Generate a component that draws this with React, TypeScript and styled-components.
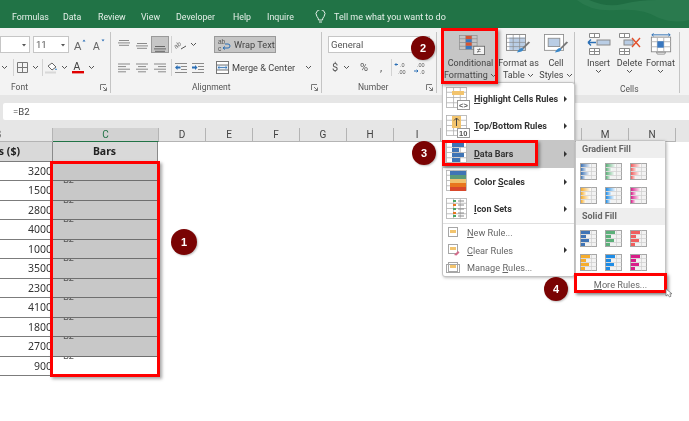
import React from "react";
import styled, { createGlobalStyle } from "styled-components";

const Global = createGlobalStyle`
  html, body { margin: 0; padding: 0; background: #fff; }
  * { box-sizing: border-box; }
`;

const UI = `Roboto, "Noto Sans", "Liberation Sans", sans-serif`;
const SHEET = `"Noto Sans", "Open Sans", "Liberation Sans", sans-serif`;

const Page = styled.div`
  position: relative;
  width: 689px;
  height: 421px;
  overflow: hidden;
  display: flex;
  flex-direction: column;
  background: #fff;
  font-family: ${UI};
  color: #444;
  filter: blur(0.25px);
`;

const TitleBar = styled.div`
  position: relative;
  height: 28px;
  flex: none;
  background: #217346;
  display: flex;
  align-items: center;
  padding: 6px 0 0 12px;
  color: #e4efe8;
  font-size: 8.8px;
  overflow: hidden;
`;
const Tab = styled.span<{ $w: number }>`
  width: ${(p) => p.$w}px;
  white-space: nowrap;
  position: relative;
`;
const Tell = styled.span`
  margin-left: 8px;
  white-space: nowrap;
  font-size: 9px;
  position: relative;
`;
const Blob = styled.svg`
  position: absolute;
  right: 0;
  top: 0;
`;

const Ribbon = styled.div`
  height: 67px;
  flex: none;
  background: #f3f3f3;
  display: flex;
  overflow: hidden;
`;
const Group = styled.div<{ $w: number; $pl?: number }>`
  width: ${(p) => p.$w}px;
  flex: none;
  padding-left: ${(p) => p.$pl ?? 0}px;
  padding-bottom: 1px;
  display: flex;
  flex-direction: column;
  position: relative;
  &::after {
    content: "";
    position: absolute;
    right: 0;
    top: 4px;
    bottom: 2px;
    width: 1px;
    background: #c4c4c4;
  }
`;
const GroupBody = styled.div`
  flex: 1;
  display: flex;
  flex-direction: column;
  padding-top: 8px;
  gap: 6px;
`;
const BigBody = styled.div<{ $pl?: number }>`
  flex: 1;
  display: flex;
  align-items: flex-start;
  padding-left: ${(p) => p.$pl ?? 0}px;
`;
const GroupLabel = styled.div<{ $lead: number }>`
  display: grid;
  grid-template-columns: ${(p) => p.$lead}px auto 1fr;
  align-items: center;
  height: 14px;
  font-size: 8.5px;
  color: #555;
  padding-right: 4px;
`;
const LabelText = styled.span`
  grid-column: 2;
  white-space: nowrap;
`;
const Launcher = styled.svg`
  grid-column: 3;
  justify-self: end;
`;
const Row = styled.div`
  display: flex;
  align-items: center;
  height: 17px;
`;
const Slot = styled.div<{ $w: number; $on?: boolean }>`
  width: ${(p) => p.$w}px;
  height: 17px;
  flex: none;
  display: flex;
  align-items: center;
  justify-content: center;
  background: ${(p) => (p.$on ? "#c6c6c6" : "transparent")};
  outline: ${(p) => (p.$on ? "1px solid #9a9a9a" : "none")};
  outline-offset: -1px;
  font-size: 11px;
  color: #555;
`;
const VSep = styled.div`
  width: 1px;
  height: 17px;
  flex: none;
  background: #d2d2d2;
`;
const Combo = styled.div<{ $w: number; $ml?: number }>`
  width: ${(p) => p.$w}px;
  margin-left: ${(p) => p.$ml ?? 0}px;
  height: 17px;
  flex: none;
  background: #fff;
  border: 1px solid #c6c6c6;
  display: flex;
  align-items: center;
  justify-content: space-between;
  padding: 0 2px;
  font-size: 9.5px;
  color: #555;
`;
const Wrap = styled.div`
  width: 62px;
  height: 17px;
  margin-left: 17px;
  flex: none;
  background: #c6c6c6;
  border: 1px solid #9a9a9a;
  display: flex;
  align-items: center;
  gap: 3px;
  padding-left: 3px;
  font-size: 9.2px;
  color: #444;
  white-space: nowrap;
`;
const Merge = styled.div`
  margin-left: 9px;
  display: flex;
  align-items: center;
  gap: 3px;
  font-size: 9.2px;
  color: #444;
  white-space: nowrap;
`;
const BigBtn = styled.div<{ $w: number }>`
  width: ${(p) => p.$w}px;
  flex: none;
  height: 55px;
  display: flex;
  flex-direction: column;
  align-items: center;
  padding-top: 5px;
  font-size: 9px;
  line-height: 12px;
  color: #444;
  white-space: nowrap;
  text-align: center;
`;
const BigBtnOn = styled(BigBtn)`
  background: #c6c6c6;
`;
const BigIconBox = styled.div<{ $ml?: number }>`
  height: 24px;
  flex: none;
  display: flex;
  align-items: flex-end;
  padding-bottom: 2px;
  margin-left: ${(p) => p.$ml ?? 0}px;
`;

const Band = styled.div<{ $h: number }>`
  height: ${(p) => p.$h}px;
  flex: none;
  background: #e6e6e6;
`;
const FormulaBar = styled.div`
  height: 17px;
  flex: none;
  background: #e6e6e6;
  padding-left: 3px;
`;
const FormulaInput = styled.div`
  height: 17px;
  background: #fff;
  border-radius: 2px 0 0 2px;
  padding-left: 10px;
  font-size: 9.5px;
  line-height: 17px;
  color: #444;
`;
const Columns = styled.div`
  height: 14px;
  flex: none;
  display: flex;
  background: #e6e6e6;
  font-size: 10px;
  color: #444;
`;
const ColHead = styled.div<{ $w: number; $on?: boolean; $clip?: boolean }>`
  width: ${(p) => p.$w}px;
  flex: none;
  display: flex;
  align-items: center;
  justify-content: ${(p) => (p.$clip ? "flex-start" : "center")};
  overflow: hidden;
  background: ${(p) => (p.$on ? "#d2d2d2" : "transparent")};
  color: ${(p) => (p.$on ? "#217346" : "#444")};
  border-right: 1px solid #b4b4b4;
  border-bottom: 1px solid ${(p) => (p.$on ? "#217346" : "#b4b4b4")};
`;
const Sheet = styled.div`
  display: grid;
  grid-template-columns: 53px 105px;
  grid-auto-rows: 19.5px;
  font-family: ${SHEET};
  font-size: 10.5px;
  color: #333;
`;
const Cell = styled.div`
  border-bottom: 1px solid #7c7c7c;
  display: flex;
  align-items: center;
  justify-content: flex-end;
  padding-right: 1px;
  overflow: hidden;
`;
const HeadCell = styled(Cell)`
  background: #d9d9d9;
  font-weight: 700;
  color: #222;
  white-space: nowrap;
  justify-content: center;
  border-right: 1px solid #8a8a8a;
`;
const ClipHead = styled(HeadCell)`
  justify-content: flex-end;
  padding-right: 32px;
`;
const BarCell = styled.div<{ $fill: boolean }>`
  background: ${(p) => (p.$fill ? "#c8c8c8" : "#fff")};
  border-bottom: 1px solid #6f6f6f;
  border-right: 1px solid #8a8a8a;
  overflow: hidden;
  padding-left: 10px;
  font-size: 9px;
  line-height: 9px;
  color: #555;
`;
const Clipped = styled.div`
  margin-top: -6px;
`;

const Frame = styled.div<{ $x: number; $y: number; $w: number; $h: number }>`
  position: absolute;
  left: ${(p) => p.$x}px;
  top: ${(p) => p.$y}px;
  width: ${(p) => p.$w}px;
  height: ${(p) => p.$h}px;
  border: 3px solid #ff0000;
  box-shadow: 2px 2px 3px rgba(0, 0, 0, 0.35);
  pointer-events: none;
`;
const Badge = styled.div<{ $x: number; $y: number; $d?: number }>`
  position: absolute;
  left: ${(p) => p.$x - (p.$d ?? 24) / 2}px;
  top: ${(p) => p.$y - (p.$d ?? 24) / 2}px;
  width: ${(p) => p.$d ?? 24}px;
  height: ${(p) => p.$d ?? 24}px;
  border-radius: 50%;
  background: #7a0303;
  color: #fff;
  font: 700 11px/${(p) => p.$d ?? 24}px "Liberation Sans", sans-serif;
  text-align: center;
  box-shadow: 1px 1px 2px rgba(0, 0, 0, 0.25);
`;

const Menu = styled.div`
  position: absolute;
  left: 442px;
  top: 82px;
  width: 133px;
  height: 195px;
  background: #fff;
  border: 1px solid #c4c4c4;
  border-radius: 3px;
  box-shadow: 1px 1px 3px rgba(0, 0, 0, 0.25);
  display: flex;
  flex-direction: column;
  padding-top: 2px;
`;
const BigItem = styled.div<{ $on?: boolean }>`
  height: 27.6px;
  flex: none;
  display: flex;
  align-items: center;
  padding-left: 3px;
  gap: 4px;
  background: ${(p) => (p.$on ? "#c6c6c6" : "transparent")};
  font-size: 9px;
  font-weight: 700;
  color: #333;
  white-space: nowrap;
  position: relative;
`;
const SmallItem = styled.div`
  height: 17.5px;
  flex: none;
  display: flex;
  align-items: center;
  padding-left: 3px;
  gap: 7px;
  font-size: 9.2px;
  color: #666;
  white-space: nowrap;
`;
const Arrow = styled.span`
  margin-left: auto;
  margin-right: 7px;
  width: 0;
  height: 0;
  border-left: 3px solid #333;
  border-top: 3px solid transparent;
  border-bottom: 3px solid transparent;
`;
const MenuRule = styled.div`
  height: 1px;
  flex: none;
  background: #e0e0e0;
`;
const Sub = styled.div`
  position: absolute;
  left: 575px;
  top: 140px;
  width: 91px;
  height: 153px;
  background: #fff;
  border: 1px solid #c4c4c4;
  border-radius: 3px;
  box-shadow: 1px 1px 3px rgba(0, 0, 0, 0.25);
  display: flex;
  flex-direction: column;
`;
const SubHead = styled.div`
  height: 17px;
  flex: none;
  background: #eeeeee;
  font-size: 9px;
  font-weight: 700;
  color: #666;
  line-height: 17px;
  padding-left: 6px;
`;
const SwatchGrid = styled.div`
  height: 50px;
  flex: none;
  display: grid;
  grid-template-columns: repeat(3, 17px);
  column-gap: 8px;
  row-gap: 7px;
  align-content: center;
  padding-left: 4px;
`;
const MoreRow = styled.div`
  margin-top: auto;
  height: 19px;
  flex: none;
  font-size: 9.2px;
  color: #666;
  text-align: center;
  line-height: 19px;
`;
const Cursor = styled.svg`
  position: absolute;
  left: 665px;
  top: 288px;
`;

const Chev = () => (
  <svg width="7" height="5" viewBox="0 0 7 5">
    <path d="M1 1l2.500 2.500L6 1" fill="none" stroke="#555" strokeWidth="1" />
  </svg>
);
const Caret = () => (
  <svg width="6" height="4" viewBox="0 0 6 4">
    <path d="M1 1h4L3 3.500z" fill="#555" />
  </svg>
);
const Launch = () => (
  <Launcher width="7" height="7" viewBox="0 0 7 7">
    <path d="M.5 6V.5H6M3 3l3.500 3.500M6.500 3.500v3h-3" fill="none" stroke="#777" strokeWidth="1" />
  </Launcher>
);
const Lines = ({ kind, hi }: { kind: "l" | "c" | "r" | "t" | "m" | "b"; hi?: boolean }) => {
  const c = hi ? "#666" : "#8a8a8a";
  if (kind === "t" || kind === "m" || kind === "b") {
    const y = kind === "t" ? 2 : kind === "m" ? 5 : 8;
    return (
      <svg width="12" height="14" viewBox="0 0 12 14">
        {[0, 2.4, 4.8].map((d) => (
          <rect key={d} x={d === 2.4 ? 0 : 1} y={y + d} width={d === 2.4 ? 12 : 10} height="1" fill={c} />
        ))}
      </svg>
    );
  }
  const rows = [12, 8, 12, 8];
  return (
    <svg width="12" height="12" viewBox="0 0 12 12">
      {rows.map((w, i) => (
        <rect key={i} x={kind === "l" ? 0 : kind === "c" ? (12 - w) / 2 : 12 - w} y={1.5 + i * 2.6} width={w} height="1" fill={c} />
      ))}
    </svg>
  );
};
const Indent = ({ flip }: { flip?: boolean }) => (
  <svg width="12" height="12" viewBox="0 0 12 12">
    {[1, 4, 7, 10].map((y) => (
      <rect key={y} x={y === 1 || y === 10 ? 0 : 6} y={y} width={y === 1 || y === 10 ? 12 : 6} height="1" fill="#8a8a8a" />
    ))}
    <path d={flip ? "M0 4.500h3V3l2.500 2.500L3 8V6.500H0z" : "M5.500 4.500h-3V3L0 5.500 2.500 8V6.500h3z"} fill="#2b6fb5" />
  </svg>
);
const Orient = () => (
  <svg width="13" height="12" viewBox="0 0 13 12" style={{ overflow: "visible" }}>
    <text x="0" y="8" fontSize="6.5" fill="#666" transform="rotate(-35 4 6)" fontFamily="Liberation Sans">ab</text>
    <path d="M7 10l5-3" stroke="#555" fill="none" />
  </svg>
);
const GrowA = ({ up }: { up: boolean }) => (
  <svg width="12" height="12" viewBox="0 0 12 12">
    <text x="0" y="11" fontSize={up ? 11 : 10} fill="#666" fontFamily="Liberation Sans">A</text>
    <path d={up ? "M8.500 2.500l1.500-2 1.500 2z" : "M8.500 .5l1.500 2 1.500-2z"} fill="#2b6fb5" />
  </svg>
);
const BorderIcon = () => (
  <svg width="11" height="11" viewBox="0 0 11 11">
    <path d="M.5.5h10v10H.5zM5.500.5v10M.5 5.500h10" fill="none" stroke="#777" />
  </svg>
);
const FillIcon = () => (
  <svg width="13" height="13" viewBox="0 0 13 13">
    <path d="M3 5l4-3 4 4-4 3z" fill="#fff" stroke="#666" />
    <path d="M11 7l1 2h-2z" fill="#3a87c8" />
    <rect x="0" y="10.500" width="11" height="2" fill="#d8d8d8" />
  </svg>
);
const FontColor = () => (
  <svg width="12" height="13" viewBox="0 0 12 13">
    <text x="1.500" y="9" fontSize="10" fill="#444" fontFamily="Liberation Sans">A</text>
    <rect x="0" y="10" width="12" height="2.400" fill="#e00000" />
  </svg>
);
const WrapIcon = () => (
  <svg width="13" height="13" viewBox="0 0 13 13">
    <text x="0" y="6" fontSize="6.500" fill="#555" fontFamily="Liberation Sans">ab</text>
    <text x="0" y="12.500" fontSize="6.500" fill="#555" fontFamily="Liberation Sans">c</text>
    <path d="M5 10h5q2 0 2-2t-2-2H7M5 10l2-1.500M5 10l2 1.500" fill="none" stroke="#2b6fb5" />
  </svg>
);
const MergeIcon = () => (
  <svg width="13" height="13" viewBox="0 0 13 13">
    <rect x=".5" y=".5" width="12" height="12" fill="#fff" stroke="#777" />
    <rect x=".5" y="4" width="12" height="5" fill="#e6eef6" stroke="#777" />
    <path d="M2 6.500h9M2 6.500l1.500-1.200M2 6.500l1.500 1.200M11 6.500l-1.500-1.200M11 6.500l-1.500 1.200" stroke="#2b6fb5" fill="none" strokeWidth=".8" />
  </svg>
);
const Dec = ({ add }: { add: boolean }) => (
  <svg width="13" height="13" viewBox="0 0 13 13" style={{ overflow: "visible" }}>
    <text x={add ? 5 : 3} y="5.500" fontSize="5.500" fill="#555" fontFamily="Liberation Sans">{add ? ".0" : ".00"}</text>
    <text x={add ? 3 : 6} y="12.500" fontSize="5.500" fill="#555" fontFamily="Liberation Sans">{add ? ".00" : ".0"}</text>
    <path d={add ? "M0 3.500h3M0 3.500l1.300-1.300M0 3.500l1.300 1.300" : "M0 10h4M4 10l-1.300-1.300M4 10l-1.300 1.300"} stroke="#2b6fb5" fill="none" />
  </svg>
);
const GridLines = ({ w, h, c = "#a6a6a6" }: { w: number; h: number; c?: string }) => (
  <g stroke={c} fill="none" strokeWidth=".8">
    <rect x=".5" y=".5" width={w - 1} height={h - 1} />
    {[1, 2, 3].map((i) => (
      <path key={i} d={`M.5 ${(i * h) / 4}H${w - 0.5}`} />
    ))}
    <path d={`M${w * 0.36} .5V${h - 0.5}M${w * 0.68} .5V${h - 0.5}`} />
  </g>
);
const CondIcon = () => (
  <svg width="27" height="20" viewBox="0 0 32 24">
    <GridLines w={22} h={18} c="#8a8a8a" />
    <rect x="8" y="1" width="7" height="4" fill="#d65532" />
    <rect x="8" y="5" width="7" height="4" fill="#3a78c0" />
    <rect x="8" y="9" width="7" height="4" fill="#d65532" />
    <rect x="8" y="13" width="7" height="4" fill="#3a78c0" />
    <rect x="17.500" y="13.500" width="13" height="10" fill="#f3f3f3" stroke="#666" />
    <text x="21" y="22" fontSize="9" fill="#444" fontFamily="Liberation Sans">≠</text>
  </svg>
);
const TableIcon = () => (
  <svg width="25" height="21" viewBox="0 0 30 25">
    <rect x=".5" y=".5" width="23" height="19" fill="#fff" stroke="#8a8a8a" />
    <rect x="4" y="4" width="19" height="15" fill="#b9cde5" />
    <GridLines w={24} h={20} c="#8a8a8a" />
    <path d="M27 9l2 1-8 8-2-1z" fill="#777" />
    <path d="M15 19q4-4 6-1-1 4-8 4z" fill="#3a87c8" />
  </svg>
);
const StylesIcon = () => (
  <svg width="25" height="21" viewBox="0 0 30 25">
    <rect x=".5" y=".5" width="23" height="19" fill="#fff" stroke="#8a8a8a" />
    <rect x="5" y="5" width="14" height="10" fill="#b9cde5" stroke="#8a8a8a" />
    <path d="M27 9l2 1-8 8-2-1z" fill="#777" />
    <path d="M15 19q4-4 6-1-1 4-8 4z" fill="#3a87c8" />
  </svg>
);
const InsertIcon = () => (
  <svg width="24" height="22" viewBox="0 0 24 22">
    <path d="M2.500.5h10v4h-10zM7.500.5v4M2.500 15.500h10v6h-10zM7.500 15.500v6M2.500 18.500h10" fill="#fff" stroke="#8a8a8a" />
    <rect x="10" y="7" width="13" height="5" fill="#b9cde5" stroke="#8a8a8a" />
    <path d="M9 9.500H1M1 9.500l3-3M1 9.500l3 3" stroke="#2b6fb5" strokeWidth="1.400" fill="none" />
  </svg>
);
const DeleteIcon = () => (
  <svg width="24" height="22" viewBox="0 0 24 22">
    <path d="M1.500.5h10v4h-10zM6.500.5v4M1.500 15.500h10v6h-10zM6.500 15.500v6M1.500 18.500h10" fill="#fff" stroke="#8a8a8a" />
    <rect x="6" y="7" width="9" height="5" fill="#b9cde5" stroke="#8a8a8a" />
    <path d="M14 5l8 9M22 5l-8 9" stroke="#e2502c" strokeWidth="1.400" />
  </svg>
);
const FormatIcon = () => (
  <svg width="22" height="22" viewBox="0 0 22 24">
    <path d="M1 2h20M1 2l2-1.500M1 2l2 1.500M21 2l-2-1.500M21 2l-2 1.500" stroke="#2b6fb5" fill="none" />
    <rect x=".5" y="4.500" width="21" height="16" fill="#fff" stroke="#8a8a8a" />
    <path d="M7 4.500v16M14 4.500v16M.5 9.500h21M.5 15h21" stroke="#b4b4b4" />
    <rect x="7" y="9" width="7" height="7" fill="#3a78c0" />
    <path d="M6 21h10l-1 2H7z" fill="#fff" stroke="#8a8a8a" />
  </svg>
);
const BulbSvg = styled.svg`
  margin-left: 15px;
  position: relative;
`;
const Bulb = () => (
  <BulbSvg width="11" height="14" viewBox="0 0 11 14">
    <path d="M3.500 10q0-2-1.600-3.600a4.400 4.400 0 1 1 7.200 0Q7.500 8 7.500 10zM4 12h3" fill="none" stroke="#e4efe8" strokeWidth="1" />
  </BulbSvg>
);

const ItemSvg = styled.svg`
  flex: none;
`;
const MenuIcon = ({ children, badge }: { children?: React.ReactNode; badge?: string }) => (
  <ItemSvg width="24" height="23" viewBox="0 0 24 23">
    <rect x=".5" y=".5" width="20" height="20" fill="#fff" />
    <GridLines w={21} h={21} c="#b0b0b0" />
    {children}
    {badge && (
      <>
        <rect x="11.500" y="13.500" width="12" height="9" fill="#fff" stroke="#999" />
        <text x="13" y="21" fontSize="7.500" fill="#555" fontFamily="Liberation Sans">{badge}</text>
      </>
    )}
  </ItemSvg>
);
const SmallIcon = ({ kind }: { kind: "new" | "clear" | "manage" }) => (
  <ItemSvg width="14" height="12" viewBox="0 0 14 12">
    <rect x="2.500" y=".5" width="9" height="9" fill="#fff" stroke="#a6a6a6" />
    <rect x="4" y="3" width="6" height="3" fill="#f2c46e" />
    {kind === "clear" && <path d="M8 11l4-4 1.500 1.500-3 3z" fill="#d36b8a" />}
    {kind === "manage" && <rect x=".5" y="2.500" width="13" height="8" fill="none" stroke="#a6a6a6" />}
  </ItemSvg>
);
const Swatch = ({ color, solid, id }: { color: string; solid: boolean; id: string }) => (
  <svg width="17" height="17" viewBox="0 0 17 17">
    <defs>
      <linearGradient id={id}>
        <stop offset="0" stopColor={color} />
        <stop offset="1" stopColor="#fff" />
      </linearGradient>
    </defs>
    <rect x=".5" y=".5" width="16" height="16" fill="#f2f2f2" stroke="#a6a6a6" />
    <path d="M.5 4.500h16M.5 8.500h16M.5 12.500h16M11.500.5v16" stroke="#cfcfcf" strokeWidth=".7" />
    {[[1, 9], [5, 5], [9, 8], [13, 4]].map(([y, w]) => (
      <rect key={y} x="1" y={y} width={solid ? w : w + 1} height="3" fill={solid ? color : `url(#${id})`} />
    ))}
  </svg>
);

const tabs: [string, number][] = [
  ["Formulas", 51], ["Data", 35], ["Review", 43], ["View", 35],
  ["Developer", 57], ["Help", 34], ["Inquire", 33],
];
const sales = [3200, 1500, 2800, 4000, 1000, 3500, 2300, 4100, 1800, 2700, 900];
const colsRight = ["D", "E", "F", "G", "H", "I", "", "", "", "M", "N"];
const swatchColors = ["#3f74b5", "#5cb07a", "#ef5f5f", "#f6ad2e", "#1e8ce6", "#d81e8a"];
const BLetter = styled.span`
  margin-left: -5px;
`;

export default function App() {
  return (
    <Page>
      <Global />
      <TitleBar>
        <Blob width="120" height="28" viewBox="0 0 120 28">
          <path d="M8 0q14 12 40 10t42 8q16 6 30 2V0z" fill="#2a7a4e" />
          <path d="M20 0q18 8 34 4T88 0z" fill="#1f6c42" />
        </Blob>
        {tabs.map(([t, w]) => (
          <Tab key={t} $w={w}>{t}</Tab>
        ))}
        <Bulb />
        <Tell>Tell me what you want to do</Tell>
      </TitleBar>
      <Ribbon>
        <Group $w={111}>
          <GroupBody>
            <Row>
              <Combo $w={30}><span /><Caret /></Combo>
              <Combo $w={36} $ml={3}><span>11</span><Caret /></Combo>
              <Slot $w={22}><GrowA up /></Slot>
              <Slot $w={16}><GrowA up={false} /></Slot>
            </Row>
            <Row>
              <Slot $w={8}><Chev /></Slot>
              <Slot $w={5} />
              <VSep />
              <Slot $w={17}><BorderIcon /></Slot>
              <Slot $w={8}><Chev /></Slot>
              <Slot $w={3} />
              <VSep />
              <Slot $w={17}><FillIcon /></Slot>
              <Slot $w={8}><Chev /></Slot>
              <Slot $w={20}><FontColor /></Slot>
              <Slot $w={7}><Chev /></Slot>
            </Row>
          </GroupBody>
          <GroupLabel $lead={11}>
            <LabelText>Font</LabelText>
            <Launch />
          </GroupLabel>
        </Group>
        <Group $w={211} $pl={4}>
          <GroupBody>
            <Row>
              <Slot $w={18}><Lines kind="t" /></Slot>
              <Slot $w={18}><Lines kind="m" /></Slot>
              <Slot $w={18} $on><Lines kind="b" hi /></Slot>
              <Slot $w={2} />
              <VSep />
              <Slot $w={17}><Orient /></Slot>
              <Slot $w={8}><Chev /></Slot>
              <Wrap><WrapIcon />Wrap Text</Wrap>
            </Row>
            <Row>
              <Slot $w={18}><Lines kind="l" /></Slot>
              <Slot $w={18}><Lines kind="c" /></Slot>
              <Slot $w={18}><Lines kind="r" /></Slot>
              <Slot $w={2} />
              <VSep />
              <Slot $w={17}><Indent /></Slot>
              <Slot $w={18}><Indent flip /></Slot>
              <Merge><MergeIcon />Merge &amp; Center<Slot $w={20}><Chev /></Slot></Merge>
            </Row>
          </GroupBody>
          <GroupLabel $lead={77}>
            <LabelText>Alignment</LabelText>
            <Launch />
          </GroupLabel>
        </Group>
        <Group $w={115} $pl={6}>
          <GroupBody>
            <Row>
              <Combo $w={102}><span>General</span></Combo>
            </Row>
            <Row>
              <Slot $w={14}>$</Slot>
              <Slot $w={8}><Chev /></Slot>
              <Slot $w={4} />
              <Slot $w={20}>%</Slot>
              <Slot $w={14}>,</Slot>
              <Slot $w={3} />
              <VSep />
              <Slot $w={19}><Dec add /></Slot>
              <Slot $w={19}><Dec add={false} /></Slot>
            </Row>
          </GroupBody>
          <GroupLabel $lead={30}>
            <LabelText>Number</LabelText>
            <Launch />
          </GroupLabel>
        </Group>
        <Group $w={138} $pl={6}>
          <BigBody>
            <BigBtnOn $w={55}>
              <BigIconBox $ml={3}><CondIcon /></BigIconBox>
              <span>Conditional</span>
              <span>Formatting <Chev /></span>
            </BigBtnOn>
            <BigBtn $w={41}>
              <BigIconBox><TableIcon /></BigIconBox>
              <span>Format as</span>
              <span>Table <Chev /></span>
            </BigBtn>
            <BigBtn $w={34}>
              <BigIconBox><StylesIcon /></BigIconBox>
              <span>Cell</span>
              <span>Styles <Chev /></span>
            </BigBtn>
          </BigBody>
        </Group>
        <Group $w={105}>
          <BigBody $pl={8}>
            <BigBtn $w={31}>
              <BigIconBox><InsertIcon /></BigIconBox>
              <span>Insert</span>
              <Chev />
            </BigBtn>
            <BigBtn $w={31}>
              <BigIconBox><DeleteIcon /></BigIconBox>
              <span>Delete</span>
              <Chev />
            </BigBtn>
            <BigBtn $w={31}>
              <BigIconBox><FormatIcon /></BigIconBox>
              <span>Format</span>
              <Chev />
            </BigBtn>
          </BigBody>
          <GroupLabel $lead={45}>
            <LabelText>Cells</LabelText>
          </GroupLabel>
        </Group>
      </Ribbon>
      <Band $h={8} />
      <FormulaBar>
        <FormulaInput>=B2</FormulaInput>
      </FormulaBar>
      <Band $h={8} />
      <Columns>
        <ColHead $w={53} $clip><BLetter>B</BLetter></ColHead>
        <ColHead $w={106} $on>C</ColHead>
        {colsRight.map((c, i) => (
          <ColHead key={i} $w={47}>{c}</ColHead>
        ))}
      </Columns>
      <Sheet>
        <ClipHead>s ($)</ClipHead>
        <HeadCell>Bars</HeadCell>
        {sales.map((s, i) => (
          <React.Fragment key={s}>
            <Cell>{s}</Cell>
            <BarCell $fill={i < 10}><Clipped>B2</Clipped></BarCell>
          </React.Fragment>
        ))}
      </Sheet>

      <Frame $x={50} $y={161} $w={110} $h={216} />
      <Badge $x={184} $y={242} $d={26}>1</Badge>

      <Menu>
        <BigItem>
          <MenuIcon badge="<>"><rect x="6" y="4" width="12" height="4" fill="#f2c46e" /></MenuIcon>
          <span><u>H</u>ighlight Cells Rules</span><Arrow />
        </BigItem>
        <BigItem>
          <MenuIcon badge="10">
            <rect x="6" y="1" width="9" height="12" fill="#f2c46e" />
            <path d="M10.500 11V3M8 5.500l2.500-2.500L13 5.500" stroke="#444" fill="none" />
          </MenuIcon>
          <span><u>T</u>op/Bottom Rules</span><Arrow />
        </BigItem>
        <BigItem $on>
          <MenuIcon>
            {[[1, 12], [6, 7], [11, 12], [16, 8]].map(([y, w]) => (
              <rect key={y} x="6" y={y} width={w} height="4" fill="#3f74b5" />
            ))}
          </MenuIcon>
          <span><u>D</u>ata Bars</span><Arrow />
        </BigItem>
        <BigItem>
          <MenuIcon>
            {["#3f74b5", "#5b9a78", "#f0c26e", "#e8761e", "#d9482b"].map((c, i) => (
              <rect key={c} x="4" y={1 + i * 4} width="16" height="4" fill={c} />
            ))}
          </MenuIcon>
          <span>Color <u>S</u>cales</span><Arrow />
        </BigItem>
        <BigItem>
          <MenuIcon>
            {[3, 7, 11, 15, 18].map((y, i) => (
              <React.Fragment key={y}>
                <rect x="7" y={y - 1} width="3" height="2" fill={i % 2 ? "#e8761e" : "#4aa564"} />
                <rect x="12" y={y - 0.5} width="6" height="1" fill="#888" />
              </React.Fragment>
            ))}
          </MenuIcon>
          <span><u>I</u>con Sets</span><Arrow />
        </BigItem>
        <MenuRule />
        <SmallItem><SmallIcon kind="new" /><span><u>N</u>ew Rule...</span></SmallItem>
        <SmallItem><SmallIcon kind="clear" /><span><u>C</u>lear Rules</span><Arrow /></SmallItem>
        <SmallItem><SmallIcon kind="manage" /><span>Manage <u>R</u>ules...</span></SmallItem>
      </Menu>

      <Sub>
        <SubHead>Gradient Fill</SubHead>
        <SwatchGrid>
          {swatchColors.map((c, i) => <Swatch key={c} color={c} solid={false} id={`g${i}`} />)}
        </SwatchGrid>
        <SubHead>Solid Fill</SubHead>
        <SwatchGrid>
          {swatchColors.map((c, i) => <Swatch key={c} color={c} solid id={`s${i}`} />)}
        </SwatchGrid>
        <MoreRow><u>M</u>ore Rules...</MoreRow>
      </Sub>

      <Frame $x={441} $y={28} $w={57} $h={56} />
      <Frame $x={442} $y={140} $w={96} $h={26} />
      <Frame $x={574} $y={273} $w={93} $h={20} />
      <Badge $x={423} $y={48}>2</Badge>
      <Badge $x={424} $y={153}>3</Badge>
      <Badge $x={556} $y={289}>4</Badge>
      <Cursor width="8" height="10" viewBox="0 0 8 10">
        <path d="M1 1v7l2-1.500L4.500 9l1.500-.8L4.800 5.800H7z" fill="#fff" stroke="#666" strokeWidth=".7" />
      </Cursor>
    </Page>
  );
}
